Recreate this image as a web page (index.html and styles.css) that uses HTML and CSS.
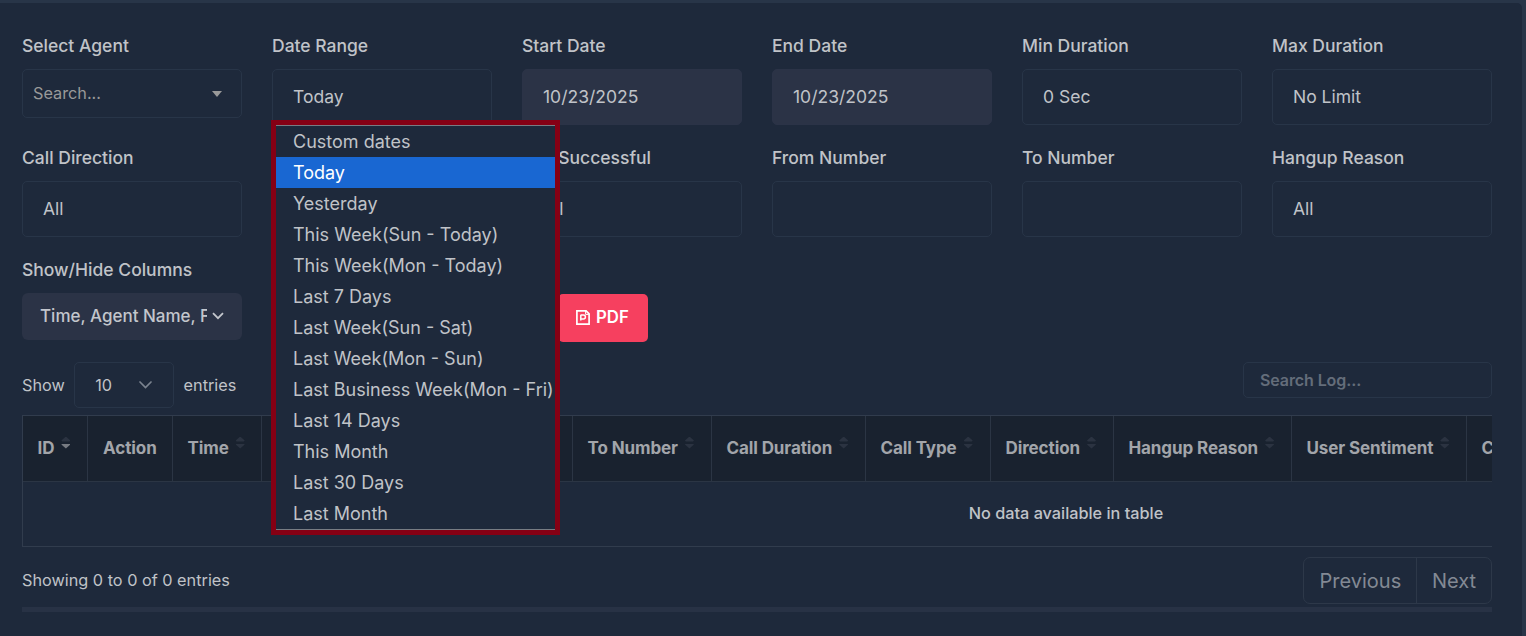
FILE: index.html
```html
<!DOCTYPE html>
<html lang="en">
<head>
<meta charset="utf-8">
<title>Call Logs</title>
<link rel="stylesheet" href="styles.css">
</head>
<body>
<main class="card">
  <section class="filters">
    <div class="field"><label class="label">Select Agent</label>
      <div class="control control-agent"><span class="agent-text">Search...</span><svg class="caret" width="10" height="6" viewBox="0 0 10 6"><path d="M0 0h10L5 6z" fill="#999"/></svg></div></div>
    <div class="field field-range"><label class="label">Date Range</label>
      <div class="control">Today</div>
      <ul class="menu">
        <li class="option">Custom dates</li>
        <li class="option option-active">Today</li>
        <li class="option">Yesterday</li>
        <li class="option">This Week(Sun - Today)</li>
        <li class="option">This Week(Mon - Today)</li>
        <li class="option">Last 7 Days</li>
        <li class="option">Last Week(Sun - Sat)</li>
        <li class="option">Last Week(Mon - Sun)</li>
        <li class="option">Last Business Week(Mon - Fri)</li>
        <li class="option">Last 14 Days</li>
        <li class="option">This Month</li>
        <li class="option">Last 30 Days</li>
        <li class="option">Last Month</li>
      </ul></div>
    <div class="field"><label class="label">Start Date</label><div class="control control-filled">10/23/2025</div></div>
    <div class="field"><label class="label">End Date</label><div class="control control-filled">10/23/2025</div></div>
    <div class="field"><label class="label">Min Duration</label><div class="control">0 Sec</div></div>
    <div class="field"><label class="label">Max Duration</label><div class="control">No Limit</div></div>

    <div class="field"><label class="label">Call Direction</label><div class="control">All</div></div>
    <div class="field"></div>
    <div class="field"><label class="label">Call Successful</label><div class="control">All</div></div>
    <div class="field"><label class="label">From Number</label><div class="control"></div></div>
    <div class="field"><label class="label">To Number</label><div class="control"></div></div>
    <div class="field"><label class="label">Hangup Reason</label><div class="control">All</div></div>

    <div class="field"><label class="label">Show/Hide Columns</label>
      <button class="columns-btn"><span class="columns-text">Time, Agent Name, From</span><svg width="12" height="8" viewBox="0 0 12 8"><path d="M1 1.2l5 5 5-5" fill="none" stroke="#c3c6cc" stroke-width="1.8"/></svg></button></div>
    <div class="field"></div>
    <div class="field field-export">
      <button class="pdf-btn"><svg width="14" height="15" viewBox="0 0 14 15" fill="none" stroke="#fff"><path d="M.9 .9h9.2l3 3v10.2H.9z" stroke-width="1.7"/><path d="M9.6 1v3.4h3.2" stroke-width="1"/><path d="M4.8 4.7v5.8M4.8 5.1h2.6a2 2 0 0 1 0 4h-2.6" stroke-width="1.5"/></svg><span>PDF</span></button></div>
  </section>

  <section class="toolbar">
    <div class="length"><span>Show</span>
      <div class="length-select"><span>10</span><svg width="13" height="8" viewBox="0 0 13 8"><path d="M1 1l5.5 5.5L12 1" fill="none" stroke="#7b838f" stroke-width="1.7" stroke-linecap="round"/></svg></div>
      <span>entries</span></div>
    <div class="search">Search Log...</div>
  </section>

  <div class="table-wrap">
    <table class="table">
      <colgroup><col class="c-id"><col class="c-action"><col class="c-time"><col class="c-agent"><col class="c-to"><col class="c-duration"><col class="c-type"><col class="c-direction"><col class="c-hangup"><col class="c-sentiment"><col class="c-last"></colgroup>
      <thead><tr>
        <th><div class="head">ID<span class="sort sort-desc"></span></div></th>
        <th><div class="head head-action">Action</div></th>
        <th><div class="head">Time<span class="sort"></span></div></th>
        <th></th>
        <th><div class="head">To Number<span class="sort"></span></div></th>
        <th><div class="head">Call Duration<span class="sort"></span></div></th>
        <th><div class="head">Call Type<span class="sort"></span></div></th>
        <th><div class="head">Direction<span class="sort"></span></div></th>
        <th><div class="head">Hangup Reason<span class="sort"></span></div></th>
        <th><div class="head">User Sentiment<span class="sort"></span></div></th>
        <th><div class="head">Cost</div></th>
      </tr></thead>
      <tbody><tr><td class="empty" colspan="11">No data available in table</td></tr></tbody>
    </table>
  </div>

  <footer class="footer">
    <span class="info">Showing 0 to 0 of 0 entries</span>
    <nav class="pager"><span class="page page-prev">Previous</span><span class="page page-next">Next</span></nav>
  </footer>
  <div class="scrollbar"></div>
</main>
</body>
</html>
```
FILE: styles.css
```css
* { box-sizing: border-box; }
body {
  margin: 0;
  height: 636px;
  overflow: hidden;
  padding: 3px 4px 0 0;
  background: #283548;
  color: #c0c3c8;
  font: 16.25px/24px Inter, sans-serif;
}
.card {
  height: 640px;
  padding: 30px 30px 0 22px;
  background: #1e293b;
  border-top-right-radius: 5px;
}
.filters {
  display: grid;
  grid-template-columns: repeat(6, 220px);
  grid-template-rows: 112px 112px 103px;
  column-gap: 30px;
}
.label {
  display: block;
  height: 36px;
  line-height: 26px;
  font-size: 17.5px;
  font-weight: 500;
}
.control {
  display: flex;
  align-items: center;
  height: 56px;
  padding: 0 20px;
  border: 1px solid #283548;
  border-radius: 5px;
  font-size: 17.5px;
}
.control-filled { background: #2b3346; border-color: #2b3347; }
.control-agent {
  justify-content: space-between;
  height: 49px;
  padding: 0 19px 0 10px;
  color: #999;
  font-size: 16.25px;
}
.agent-text { padding-bottom: 2px; }
.field-range { position: relative; }
.menu {
  position: absolute;
  z-index: 2;
  top: 87px;
  left: -1px;
  width: 289px;
  margin: 0;
  padding: 1px 0;
  list-style: none;
  background: #1e293b;
  border: 5px solid #850014;
  box-shadow: inset 0 1px #777c83, inset 0 -1px #777c83;
}
.option {
  height: 31px;
  padding-left: 17px;
  font-size: 18px;
  line-height: 31px;
  white-space: nowrap;
}
.option-active { background: #1967d2; color: #fff; }
.columns-btn {
  display: flex;
  align-items: center;
  gap: 5px;
  width: 220px;
  height: 47px;
  padding: 0 17px 2px 18px;
  border: 0;
  border-radius: 6px;
  background: #2b3346;
  color: #c3c6cc;
  font: 500 17px Inter, sans-serif;
}
.columns-text {
  width: 167px;
  overflow: hidden;
  text-align: left;
  white-space: nowrap;
}
.field-export { padding: 37px 0 0 36px; }
.pdf-btn {
  display: flex;
  align-items: center;
  gap: 6px;
  width: 90px;
  height: 48px;
  padding: 0 0 2px 18px;
  border: 0;
  border-radius: 5px;
  background: #f6405f;
  color: #fff;
  font: 600 16.8px Inter, sans-serif;
}
.toolbar { display: flex; justify-content: space-between; margin-top: 2px; height: 53px; }
.length { display: flex; align-items: center; gap: 9.4px; height: 46px; }
.length-select {
  display: flex;
  align-items: center;
  justify-content: space-between;
  width: 100px;
  height: 46px;
  padding: 0 21px 0 20px;
  border: 1px solid #283548;
  border-radius: 5px;
}
.search {
  width: 249px;
  height: 36px;
  padding: 0 16px;
  border: 1px solid #283548;
  border-radius: 5px;
  color: #646d7a;
  font-size: 16px;
  font-weight: 600;
  letter-spacing: -.1px;
  line-height: 34px;
}
.table-wrap { width: 1470px; overflow: hidden; }
.table {
  width: 2088px;
  table-layout: fixed;
  border-collapse: separate;
  border-spacing: 0;
  border: 1px solid #313c4d;
}
.c-id { width: 65px; }
.c-action { width: 85px; }
.c-time { width: 89px; }
.c-agent { width: 311px; }
.c-to { width: 139px; }
.c-duration { width: 154px; }
.c-type { width: 125px; }
.c-direction { width: 123px; }
.c-hangup { width: 178px; }
.c-sentiment { width: 175px; }
.table th {
  height: 66px;
  padding: 0 0 2px 14.5px;
  background: #19222f;
  border-right: 1px solid #2b3544;
  border-bottom: 1px solid #2b3544;
  color: #a2a5aa;
  font-size: 17px;
  font-weight: 700;
  letter-spacing: -.1px;
  text-align: left;
  white-space: nowrap;
}
.head { display: flex; align-items: center; gap: 7px; }
.head-action { padding-left: .6px; }
.sort {
  display: grid;
  gap: 2px;
  margin-top: -10px;
}
.sort::before, .sort::after {
  content: "";
  width: 9px;
  height: 5px;
  background: #2b3341;
}
.sort::before { clip-path: polygon(50% 0, 100% 80%, 90% 100%, 10% 100%, 0 80%); }
.sort::after { clip-path: polygon(10% 0, 90% 0, 100% 20%, 50% 100%, 0 20%); }
.sort-desc::after { background: #777b82; }
.empty {
  height: 64px;
  padding: 0 0 2px;
  font-weight: 500;
  text-align: center;
}
.footer {
  display: flex;
  align-items: center;
  justify-content: space-between;
  margin-top: 10px;
  height: 47px;
}
.info { padding-bottom: 2px; }
.pager {
  display: flex;
  height: 47px;
  border: 1px solid #2d3849;
  border-radius: 7px;
  color: #838994;
  font-size: 20px;
  line-height: 46px;
}
.page-prev { width: 113px; padding-left: 15.5px; border-right: 1px solid #2d3849; }
.page-next { width: 74px; padding-left: 15px; }
.scrollbar { width: 1470px; height: 5px; margin-top: 3px; background: #283245; }
```
